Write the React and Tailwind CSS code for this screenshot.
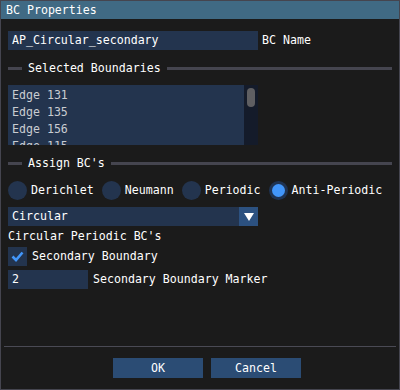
import React from 'react';

const frame = "bg-[#23344e]";

function Separator({ label }) {
    return (
        <div className="flex items-center h-[17px] pr-[7px]">
            <div className="w-[14px] h-[3px] bg-[#45454f]" />
            <span className="mx-[6px] leading-[13px]">{label}</span>
            <div className="flex-1 h-[3px] bg-[#45454f]" />
        </div>
    );
}

function Radio({ label, active }) {
    return (
        <div className="flex items-center mr-[8px]">
            <div className={`w-[19px] h-[19px] rounded-full ${active ? "bg-[#1f3352]" : "bg-[#23344e]"} flex items-center justify-center`}>
                {active && <div className="w-[13px] h-[13px] rounded-full bg-[#4296fa]" />}
            </div>
            <span className="ml-[4px]">{label}</span>
        </div>
    );
}

export default function App() {
    const edges = ["Edge 131", "Edge 135", "Edge 156", "Edge 115"];

    return (
        <div
            className="w-[400px] h-[390px] bg-[#1b1b1b] border border-[#45454f] flex flex-col text-white text-[11.6px] leading-[13px]"
            style={{ fontFamily: '"DejaVu Sans Mono", "Liberation Mono", monospace' }}
        >
            <div className="h-[18px] bg-[#406a84] flex items-center pl-[5px] shrink-0">
                BC Properties
            </div>

            <div className="pl-[7px] flex flex-col">
                <div className="mt-[12px] flex items-center h-[19px]">
                    <div className={`w-[250px] h-[19px] ${frame} flex items-center px-[4px]`}>AP_Circular_secondary</div>
                    <span className="ml-[4px]">BC Name</span>
                </div>

                <div className="mt-[10px]">
                    <Separator label="Selected Boundaries" />
                </div>

                <div className="mt-[8px] w-[250px] h-[60px] flex">
                    <div className={`flex-1 ${frame} overflow-hidden pt-[2px] pl-[4px] text-[#c9ccd1]`}>
                        {edges.map((e) => (
                            <div key={e} className="leading-[17px]">{e}</div>
                        ))}
                    </div>
                    <div className="w-[14px] bg-[#141b2a] pt-[3px] flex justify-center">
                        <div className="w-[8px] h-[19px] rounded-full bg-[#5f5f62]" />
                    </div>
                </div>

                <div className="mt-[10px]">
                    <Separator label="Assign BC's" />
                </div>

                <div className="mt-[9px] flex items-center h-[19px]">
                    <Radio label="Derichlet" />
                    <Radio label="Neumann" />
                    <Radio label="Periodic" />
                    <Radio label="Anti-Periodic" active />
                </div>

                <div className={`mt-[7px] w-[250px] h-[19px] ${frame} flex items-center`}>
                    <span className="flex-1 pl-[4px]">Circular</span>
                    <div className="w-[19px] h-[19px] bg-[#2c5180] flex items-center justify-center">
                        <svg width="10" height="9" viewBox="0 0 10 9">
                            <polygon points="0,1 10,1 5,9" fill="#ffffff" />
                        </svg>
                    </div>
                </div>

                <div className="mt-[4px] h-[13px]">Circular Periodic BC's</div>

                <div className="mt-[4px] flex items-center h-[19px]">
                    <div className={`w-[19px] h-[19px] ${frame} flex items-center justify-center`}>
                        <svg width="13" height="11" viewBox="0 0 13 11">
                            <polyline points="1.5,5.5 5,9 11.5,1.5" fill="none" stroke="#4296fa" strokeWidth="2.6" />
                        </svg>
                    </div>
                    <span className="ml-[5px]">Secondary Boundary</span>
                </div>

                <div className="mt-[4px] flex items-center h-[19px]">
                    <div className={`w-[80px] h-[19px] ${frame} flex items-center px-[4px]`}>2</div>
                    <span className="ml-[5px]">Secondary Boundary Marker</span>
                </div>
            </div>

            <div className="flex-1" />

            <div className="mx-[3px] h-[1px] bg-[#4a4a54]" />

            <div className="mt-[11px] mb-[11px] flex gap-[8px] pl-[112px]">
                <div className="w-[90px] h-[20px] bg-[#2b4c74] flex items-center justify-center">OK</div>
                <div className="w-[90px] h-[20px] bg-[#2b4c74] flex items-center justify-center">Cancel</div>
            </div>
        </div>
    );
}
